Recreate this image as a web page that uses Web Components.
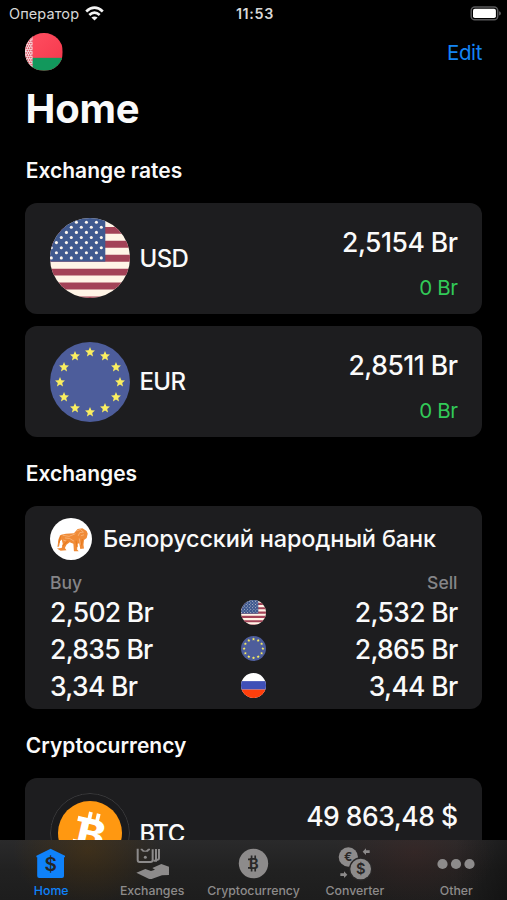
<!DOCTYPE html>
<html lang="en">
<head>
<meta charset="utf-8">
<title>Home</title>
<style>
	html, body {
		margin: 0;
		height: 100%;
		background: #000;
		overflow: hidden;
	}
	body {
		font-family: Inter, "Liberation Sans", sans-serif;
		font-weight: 450;
		color: #fafafa;
	}
</style>
</head>
<body>
<app-screen>
	<status-bar slot="status" carrier="Оператор" time="11:53"></status-bar>
	<nav-header title-text="Home" action="Edit"></nav-header>
	<list-section heading="Exchange rates">
		<rate-card code="USD" icon="us" amount="2,5154 Br" change="0 Br"></rate-card>
		<rate-card code="EUR" icon="eu" amount="2,8511 Br" change="0 Br"></rate-card>
	</list-section>
	<list-section heading="Exchanges">
		<exchange-card name="Белорусский народный банк">
			<exchange-row buy="2,502 Br" icon="us" sell="2,532 Br"></exchange-row>
			<exchange-row buy="2,835 Br" icon="eu" sell="2,865 Br"></exchange-row>
			<exchange-row buy="3,34 Br" icon="ru" sell="3,44 Br"></exchange-row>
		</exchange-card>
	</list-section>
	<list-section heading="Cryptocurrency">
		<rate-card code="BTC" icon="btc" amount="49 863,48 $"></rate-card>
	</list-section>
	<tab-bar slot="tabs">
		<tab-item icon="home" label="Home" active></tab-item>
		<tab-item icon="exchanges" label="Exchanges"></tab-item>
		<tab-item icon="crypto" label="Cryptocurrency"></tab-item>
		<tab-item icon="converter" label="Converter"></tab-item>
		<tab-item icon="other" label="Other"></tab-item>
	</tab-bar>
</app-screen>

<script>
const range = (n) => Array.from({ length: n }, (_, i) => i);

function star(cx, cy, r) {
	const points = range(10).map((i) => {
		const a = (Math.PI / 5) * i - Math.PI / 2;
		const d = i % 2 ? r * 0.45 : r;
		return `${(cx + d * Math.cos(a)).toFixed(2)},${(cy + d * Math.sin(a)).toFixed(2)}`;
	});
	return `<polygon points="${points.join(" ")}"/>`;
}

function usStars() {
	let out = "";
	for (let row = 0; row < 8; row++) {
		const shift = row % 2 ? 1.3 : 6.4;
		for (let x = shift; x < 54; x += 10) {
			out += `<circle cx="${x}" cy="${4.2 + row * 5.1}" r="1.55"/>`;
		}
	}
	return out;
}

function ornament() {
	let out = "";
	for (let row = 0; row < 16; row++) {
		for (let col = 0; col < 3; col++) {
			const x = 2.5 + col * 5 + (row % 2 ? 2.5 : 0);
			out += `<path d="M${x} ${row * 5}l2.2 2.5-2.2 2.5-2.2-2.5z"/>`;
		}
	}
	return out;
}

// Round pictures share an 80x80 box, clipped by the host
const PICTURES = {
	us: `
		<rect width="80" height="80" fill="#fff4e6"/>
		<path d="M0 12.4h80M0 26.3h80M0 40.2h80M0 54.1h80M0 68h80M0 81.9h80" stroke="#a34257" stroke-width="6.9"/>
		<rect width="55.3" height="43.6" fill="#405a90"/>
		<g fill="#fdf6ee">${usStars()}</g>`,
	eu: `
		<rect width="80" height="80" fill="#4d5d9b"/>
		<g fill="#faee60">${range(12).map((i) => star(40 + 30 * Math.sin(i * Math.PI / 6), 40.2 - 30 * Math.cos(i * Math.PI / 6), 5.2)).join("")}</g>`,
	ru: `
		<rect width="80" height="80" fill="#fff"/>
		<rect y="26" width="80" height="27" fill="#3f50b7"/>
		<rect y="53" width="80" height="27" fill="#ff3f0c"/>`,
	by: `
		<linearGradient id="r" x2="1" y2="1"><stop stop-color="#ff5062"/><stop offset="1" stop-color="#f5364b"/></linearGradient>
		<rect width="80" height="80" fill="url(#r)"/>
		<rect y="53" width="80" height="27" fill="#12985c"/>
		<rect width="16" height="80" fill="#f9e4e6"/>
		<g fill="#dd5668">${ornament()}</g>`,
	btc: `
		<circle cx="40" cy="40" r="39.5" fill="#1b1b1d" stroke="#3b3b3d"/>
		<circle cx="40" cy="40" r="32" fill="#ff9811"/>
		<g transform="translate(.8 0) rotate(13 40 40)" fill="#fff">
			<text x="26.5" y="54.5" font-size="39" font-weight="800" textLength="28" lengthAdjust="spacingAndGlyphs">B</text>
			<path d="M33.500 19.500h3.800v9h-3.800zM41.500 19.500h3.800v9h-3.800zM33.500 52h3.800v9h-3.800zM41.500 52h3.800v9h-3.800zM24 26.100h6v5h-6zM24 49.500h6v5h-6z"/>
		</g>`,
	lion: `
		<rect width="80" height="80" fill="#fff"/>
		<g transform="translate(0 -4.5)">
			<path d="M13 62l9-1 2-8-2-8-3 3-2 10-3 1 2-15 5-8 9-2 15-1 7-8 9-1 8 5 2 5-2 8-5 4-1 9 1 7-7 1-2-11-3 1-1 11 3 3h-9l-1-14-7-3-6 5-3 6 3 4-11 1z" fill="#f08b37"/>
			<g fill="none" stroke="#fbc08c" stroke-width="1.3"><path d="M24 37l12 2 12-5M28 42l9 1 8 5M50 29l7-3 6 5-7 1-3 6M58 38l6-2M25 46l6 2M55 43l2 12"/></g>
			<path d="M20 37l-3 14M33 48l-9 9M49 47l2 12M61 44l-2 12" stroke="#e97a1c" stroke-width="2.500" fill="none"/>
		</g>`,
};

const TAB_ICONS = {
	home: `<svg width="30" height="31" viewBox="0 0 30 31">
		<path d="M14.600.8 29 7.800v1.500h-1V28q0 2-2 2H3.200q-2 0-2-2V9.300H.4V7.800z" fill="currentColor"/>
		<text x="14.700" y="23.300" font-size="19" font-weight="600" text-anchor="middle" fill="#252525">$</text>
	</svg>`,
	exchanges: `<svg width="35" height="33.300" viewBox="346 380 105 100">
		<path d="M354 385v34q0 6 6 6h32q7 0 7-6v-32M409 386v35h-7M418 386v27q0 5-6 6" fill="none" stroke="currentColor" stroke-width="6"/>
		<path d="M363 385h5q8 12 17 0h6v4q-5 2-6 5h-16q-1-3-6-5z" fill="currentColor"/>
		<circle cx="377" cy="411" r="4.500" fill="currentColor"/>
		<path d="M350 457l27-11 17 6 12-4-8-5 27-12 23 8v25l-21 1-31 11q-5 1-9-1z" fill="currentColor"/>
	</svg>`,
	crypto: `<svg width="31" height="31" viewBox="0 0 31 31">
		<circle cx="15.500" cy="15.500" r="14.700" fill="currentColor"/>
		<text x="15.800" y="20.800" font-size="14.500" font-weight="700" text-anchor="middle" fill="#292828">B</text>
		<path d="M13.600 7.500v4M17.200 7.500v4M13.600 19.500v4M17.200 19.500v4M10 11.300h3M10 19.800h3" stroke="#292828" stroke-width="1.700"/>
	</svg>`,
	converter: `<svg width="35" height="36" viewBox="80 17 105 108">
		<circle cx="114" cy="50" r="29" fill="currentColor"/>
		<text x="113" y="63" font-size="36" font-weight="700" text-anchor="middle" fill="#2b2928">€</text>
		<circle cx="151" cy="86" r="35" fill="#2a2828"/>
		<circle cx="151" cy="86" r="31" fill="currentColor"/>
		<text x="151" y="102" font-size="44" font-weight="600" text-anchor="middle" fill="#2a2828">$</text>
		<path d="M157 34l10-10v6h11v8h-11v6zM111 103l-10-10v6H90v8h11v6z" fill="currentColor"/>
	</svg>`,
	other: `<svg width="38" height="12" viewBox="0 0 38 12" fill="currentColor">
		<circle cx="5.500" cy="6" r="5.100"/><circle cx="19" cy="6" r="5.100"/><circle cx="32.500" cy="6" r="5.100"/>
	</svg>`,
};

class BaseElement extends HTMLElement {
	constructor() {
		super();
		this.attachShadow({ mode: "open" });
	}

	connectedCallback() {
		this.shadowRoot.innerHTML = this.render();
	}

	attr(name) {
		return this.getAttribute(name) ?? "";
	}
}

customElements.define("app-screen", class extends BaseElement {
	render() {
		return `
		<style>
			:host {
				display: flex;
				flex-direction: column;
				height: 900px;
				width: 507px;
				background: #000;
				overflow: hidden;
			}
			main {
				flex: 1;
				min-height: 0;
				overflow: hidden;
				padding: 0 25px;
			}
		</style>
		<slot name="status"></slot>
		<main><slot></slot></main>
		<slot name="tabs"></slot>`;
	}
});

customElements.define("status-bar", class extends BaseElement {
	render() {
		return `
		<style>
			:host {
				flex: none;
				display: grid;
				grid-template-columns: 1fr auto 1fr;
				align-items: center;
				height: 27px;
				padding: 0 6px 0 9px;
				font-size: 14.500px;
				color: #d8d8d8;
			}
			.carrier { display: flex; align-items: center; gap: 6px; }
			.carrier span { font-weight: 400; letter-spacing: .1px; }
			time { font-weight: 600; font-size: 14.300px; letter-spacing: .7px; }
			.battery { justify-self: end; }
			svg { display: block; }
		</style>
		<div class="carrier">
			<span>${this.attr("carrier")}</span>
			<svg width="19" height="15" viewBox="0 0 19 15" fill="none" stroke="#f4f4f4" stroke-width="2.700">
				<path d="M1.200 5.400q8.300-7.600 16.600 0M4.300 9q5.200-4.600 10.400 0"/>
				<path d="M9.500 14.500 6.400 11.600q3.100-2.300 6.200 0z" fill="#f4f4f4" stroke="none"/>
			</svg>
		</div>
		<time>${this.attr("time")}</time>
		<svg class="battery" width="31" height="15" viewBox="0 0 31 15">
			<rect x="1.200" y="1" width="26.500" height="12.800" rx="3.600" fill="none" stroke="#59595b" stroke-width="1.500"/>
			<rect x="3" y="2.800" width="22.900" height="9.200" rx="1.800" fill="#fff"/>
			<path d="M29 5.300q2 .6 2 2.100t-2 2.100z" fill="#59595b"/>
		</svg>`;
	}
});

customElements.define("round-picture", class extends BaseElement {
	render() {
		return `
		<style>
			:host {
				display: block;
				flex: none;
				width: var(--size, 80px);
				height: var(--size, 80px);
				border-radius: 50%;
				overflow: hidden;
			}
			svg { display: block; width: 100%; height: 100%; }
		</style>
		<svg viewBox="0 0 80 80">${PICTURES[this.attr("name")]}</svg>`;
	}
});

customElements.define("nav-header", class extends BaseElement {
	render() {
		return `
		<style>
			:host { display: block; }
			nav {
				display: flex;
				align-items: center;
				justify-content: space-between;
				height: 50px;
			}
			round-picture { --size: 37.500px; }
			a { color: #1484f4; font-size: 20.500px; font-weight: 400; letter-spacing: -.4px; }
			h1 {
				box-sizing: border-box;
				height: 57.500px;
				margin: 0;
				padding: 6px 0 0 .500px;
				font-size: 40px;
				font-weight: 700;
				letter-spacing: -.2px;
				line-height: 51.500px;
			}
		</style>
		<nav>
			<round-picture name="by"></round-picture>
			<a>${this.attr("action")}</a>
		</nav>
		<h1>${this.attr("title-text")}</h1>`;
	}
});

customElements.define("list-section", class extends BaseElement {
	render() {
		return `
		<style>
			:host { display: block; }
			h2 {
				box-sizing: border-box;
				height: 68.500px;
				margin: 0;
				padding: 3.500px 0 0 .800px;
				font-size: 21px;
				font-weight: 600;
				line-height: 65px;
			}
			.items { display: flex; flex-direction: column; gap: 12.700px; }
		</style>
		<h2>${this.attr("heading")}</h2>
		<div class="items"><slot></slot></div>`;
	}
});

customElements.define("rate-card", class extends BaseElement {
	render() {
		return `
		<style>
			:host {
				box-sizing: border-box;
				display: flex;
				align-items: center;
				height: 110.700px;
				padding: 0 24.500px;
				background: #1d1d1f;
				border-radius: 12px;
			}
			.code { margin-left: 10px; font-size: 24px; letter-spacing: -.600px; }
			.values {
				display: flex;
				flex-direction: column;
				align-items: flex-end;
				align-self: flex-start;
				gap: 15.500px;
				margin-left: auto;
				padding-top: 22.500px;
			}
			.amount { font-size: 26.500px; line-height: 32px; letter-spacing: -.500px; }
			.change { font-size: 20.500px; font-weight: 400; line-height: 30px; letter-spacing: -.400px; color: #32ca58; }
		</style>
		<round-picture name="${this.attr("icon")}"></round-picture>
		<span class="code">${this.attr("code")}</span>
		<div class="values">
			<span class="amount">${this.attr("amount")}</span>
			<span class="change">${this.attr("change")}</span>
		</div>`;
	}
});

customElements.define("exchange-card", class extends BaseElement {
	render() {
		return `
		<style>
			:host {
				display: block;
				padding: 12px 24.500px 5.300px;
				background: #1d1d1f;
				border-radius: 12px;
			}
			header { display: flex; align-items: center; gap: 11px; height: 42.500px; }
			header round-picture { --size: 42.500px; }
			h3 { margin: 0; font-size: 23.500px; font-weight: 450; letter-spacing: -.170px; white-space: nowrap; }
			.legend {
				display: flex;
				justify-content: space-between;
				padding: 12px 0 .500px .500px;
				font-size: 17.500px;
				line-height: 21.300px;
				color: #858588;
			}
		</style>
		<header>
			<round-picture name="lion"></round-picture>
			<h3>${this.attr("name")}</h3>
		</header>
		<div class="legend"><span>Buy</span><span>Sell</span></div>
		<slot></slot>`;
	}
});

customElements.define("exchange-row", class extends BaseElement {
	render() {
		return `
		<style>
			:host {
				display: grid;
				grid-template-columns: 1fr 25px 1fr;
				align-items: center;
				height: 36.700px;
				font-size: 26.500px;
				letter-spacing: -.680px;
			}
			round-picture { --size: 25px; }
			.buy { padding-left: .500px; }
			.sell { text-align: right; }
		</style>
		<span class="buy">${this.attr("buy")}</span>
		<round-picture name="${this.attr("icon")}"></round-picture>
		<span class="sell">${this.attr("sell")}</span>`;
	}
});

customElements.define("tab-bar", class extends BaseElement {
	render() {
		return `
		<style>
			:host {
				flex: none;
				display: grid;
				grid-template-columns: repeat(5, 1fr);
				height: 60px;
				color: #8d8b8b;
				background:
					radial-gradient(ellipse 75px 60px at 88px 10px, rgba(110, 66, 0, .32), transparent),
					radial-gradient(ellipse 80px 60px at 415px 12px, rgba(90, 40, 36, .25), transparent),
					linear-gradient(90deg, transparent 455px, rgba(0, 0, 0, .35)),
					linear-gradient(#2a2a2b, #212121 50%, #1d1d1d);
			}
		</style>
		<slot></slot>`;
	}
});

customElements.define("tab-item", class extends BaseElement {
	render() {
		return `
		<style>
			:host {
				display: flex;
				flex-direction: column;
				align-items: center;
				padding-top: 5px;
			}
			:host([active]) { padding-left: 1px; color: #0f82fa; }
			.icon { display: grid; place-items: center; height: 37px; }
			svg { display: block; }
			.label { font-size: 12.300px; font-weight: 500; line-height: 18px; white-space: nowrap; }
		</style>
		<div class="icon">${TAB_ICONS[this.attr("icon")]}</div>
		<span class="label">${this.attr("label")}</span>`;
	}
});
</script>
</body>
</html>
